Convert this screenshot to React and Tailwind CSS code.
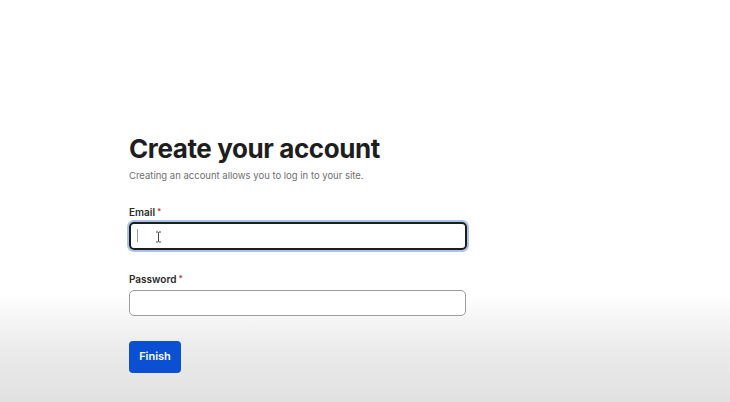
import React from 'react';

// I-beam mouse pointer sitting over the focused field
const IBeam = () => (
  <svg width="7" height="12" viewBox="0 0 7 12" className="absolute left-[26px] top-[9px]">
    <path d="M1 1h2l0.5 0.5L4 1h2M3.5 1.5v9M1 11h2l0.5-0.5L4 11h2" fill="none" stroke="#444" strokeWidth="1" />
  </svg>
);

function Field({ label, focused }) {
  return (
    <div className="flex flex-col">
      <label className="text-[10px] font-semibold text-[#2a2a2a] mb-[6px] leading-none">
        {label}
        <span className="text-[#c0392b] text-[8px] ml-[2px] align-top">*</span>
      </label>
      {focused ? (
        <div className="relative w-[338px] h-[28px] rounded-[5px] ring-2 ring-[#a9c4ea] -mt-[1px]">
          <div className="w-full h-full rounded-[5px] border-2 border-[#1d1d1d] bg-white" />
          <span className="absolute left-[8px] top-[7px] w-px h-[13px] bg-[#9a9a9a]" />
          <IBeam />
        </div>
      ) : (
        <div className="w-[337px] h-[26px] rounded-[5px] border border-[#9c9c9c] bg-white" />
      )}
    </div>
  );
}

export default function App() {
  return (
    <div
      className="w-[730px] h-[402px] overflow-hidden bg-[linear-gradient(to_bottom,#ffffff_0%,#ffffff_73%,#ececec_86%,#e1e1e1_100%)]"
      style={{ fontFamily: 'Inter, "Liberation Sans", sans-serif' }}
    >
      <div className="pl-[129px] pt-[132px] flex flex-col">
        <h1 className="text-[26px] font-bold text-[#1e1e1e] tracking-[-0.4px] leading-[34px]">
          Create your account
        </h1>
        <p className="text-[9.5px] text-[#707070] mt-[5px] leading-none">
          Creating an account allows you to log in to your site.
        </p>

        <div className="mt-[26px]">
          <Field label="Email" focused />
        </div>
        <div className="mt-[24px]">
          <Field label="Password" />
        </div>

        <button className="mt-[25px] w-[52px] h-[32px] rounded-[4px] bg-[#0b4fd3] text-white text-[11px] font-semibold">
          Finish
        </button>
      </div>
    </div>
  );
}
